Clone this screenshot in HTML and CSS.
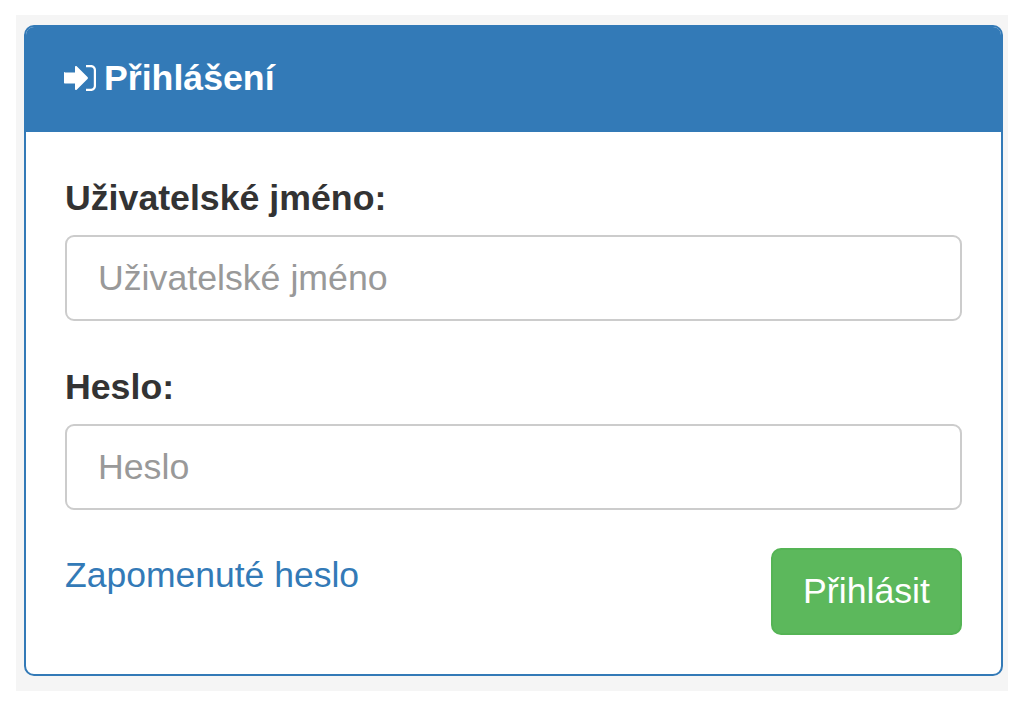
FILE: index.html
```html
<!DOCTYPE html>
<html lang="cs">
<head>
<meta charset="utf-8">
<title>Přihlášení</title>
<link rel="stylesheet" href="styles.css">
</head>
<body>
<div class="backdrop">
  <section class="panel">
    <header class="panel-head">
      <svg class="icon" viewBox="0 0 32 26" width="32" height="26" aria-hidden="true">
        <path fill="#fff" d="M1 7.500h10V2c0-.9 1-1.300 1.700-.7L23.500 12c.6.500.6 1.500 0 2L12.700 24.700c-.7.600-1.700.2-1.700-.7v-5.500H1c-.6 0-1-.4-1-1v-9.500c0-.6.4-1 1-1z"/>
        <path fill="#fff" d="M22 0h5c2.800 0 5 2.200 5 5v16c0 2.800-2.200 5-5 5h-5v-2.200h5c1.500 0 2.800-1.300 2.800-2.800V5c0-1.500-1.300-2.800-2.800-2.800h-5z"/>
      </svg>
      <h1 class="panel-title">Přihlášení</h1>
    </header>
    <form class="panel-body">
      <div class="field">
        <label class="field-label" for="user">Uživatelské jméno:</label>
        <input class="field-input" id="user" type="text" placeholder="Uživatelské jméno">
      </div>
      <div class="field">
        <label class="field-label" for="pass">Heslo:</label>
        <input class="field-input" id="pass" type="password" placeholder="Heslo">
      </div>
      <div class="actions">
        <a class="forgot" href="#">Zapomenuté heslo</a>
        <button class="submit" type="button">Přihlásit</button>
      </div>
    </form>
  </section>
</div>
</body>
</html>
```
FILE: styles.css
```css
* { box-sizing: border-box; }
html, body { margin: 0; height: 709px; background: #fff; overflow: hidden; }
body { padding: 15px 16px 18px; font-family: "Liberation Sans", Arial, sans-serif; color: #333; }
.backdrop { height: 676px; background: #f5f5f5; padding: 10px 5px 15px 8px; }
.panel { height: 651px; background: #fff; border: 2px solid #337ab7; border-radius: 10px; overflow: hidden; display: flex; flex-direction: column; }
.panel-head { height: 105px; flex: none; background: #337ab7; color: #fff; display: flex; align-items: center; gap: 8px; padding: 0 0 4px 38px; }
.icon { flex: none; }
.panel-title { margin: 0; font-size: 35.700px; line-height: 36px; font-weight: 700; }
.panel-body { display: flex; flex-direction: column; padding: 48px 39px 0; }
.field { margin-bottom: 48px; }
.field:nth-child(2) { margin-bottom: 38px; }
.field-label { display: block; font-size: 35.700px; line-height: 36px; font-weight: 700; margin-bottom: 19px; color: #333; }
.field-input { display: block; width: 100%; height: 86px; padding: 0 31px; border: 2px solid #ccc; border-radius: 9px; font: 35.700px "Liberation Sans", Arial, sans-serif; color: #555; background: #fff; outline: 0; }
.field-input::placeholder { color: #999; opacity: 1; }
.actions { display: flex; justify-content: space-between; align-items: flex-start; }
.forgot { font-size: 35.500px; line-height: 54px; color: #337ab7; text-decoration: none; }
.submit { width: 191px; height: 87px; border: 2px solid #55b455; border-radius: 10px; background: #5cb85c; color: #fff; font: 35.700px "Liberation Sans", Arial, sans-serif; padding: 0; }
```
